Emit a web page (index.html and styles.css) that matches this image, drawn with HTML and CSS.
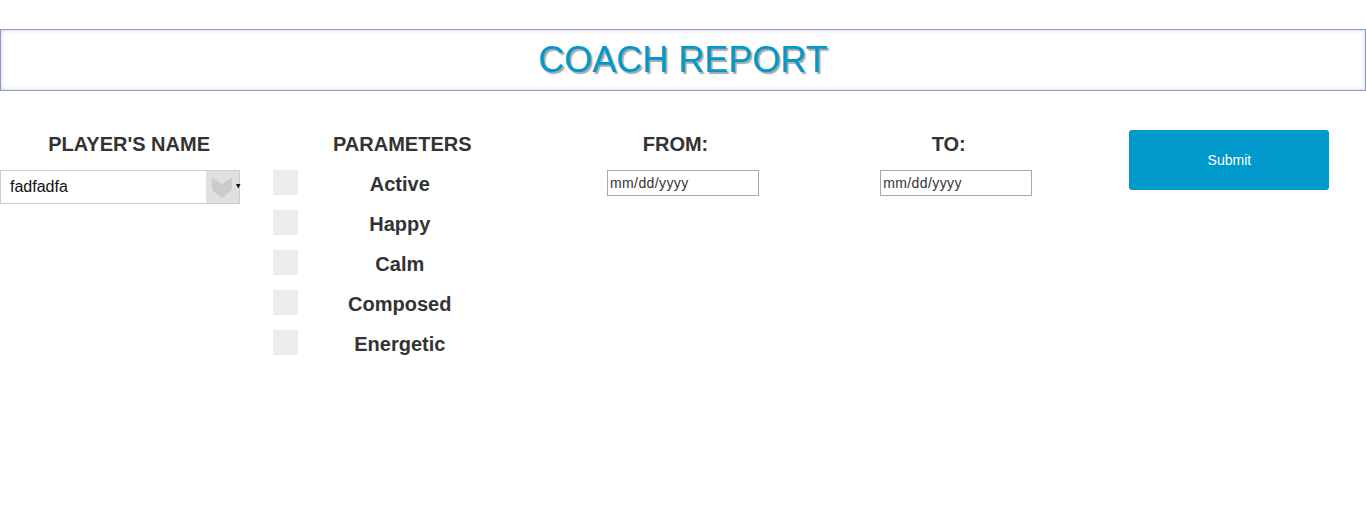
FILE: index.html
```html
<!DOCTYPE html>
<html>
<head>
<meta charset="utf-8">
<title>Coach Report</title>
<link rel="stylesheet" href="styles.css">
</head>
<body>
<div class="banner"><h1 class="title">COACH REPORT</h1></div>
<form class="report">
  <div class="col">
    <h3 class="head">PLAYER'S NAME</h3>
    <div class="select">
      <span class="select-value">fadfadfa</span>
      <span class="select-arrow">
        <svg width="33" height="32" viewBox="0 0 33 32"><path d="M6 7 L16 13 L26 7 L26 19 L16 27 L6 19 Z" fill="#cbcbcb"/><path d="M30 13 L34.5 13 L32.2 17.5 Z" fill="#111"/></svg>
      </span>
    </div>
  </div>
  <div class="col">
    <h3 class="head">PARAMETERS</h3>
    <div class="params">
      <div class="param"><span class="box"></span><span class="plabel">Active</span></div>
      <div class="param"><span class="box"></span><span class="plabel">Happy</span></div>
      <div class="param"><span class="box"></span><span class="plabel">Calm</span></div>
      <div class="param"><span class="box"></span><span class="plabel">Composed</span></div>
      <div class="param"><span class="box"></span><span class="plabel">Energetic</span></div>
    </div>
  </div>
  <div class="col center">
    <h3 class="head">FROM:</h3>
    <input class="date" type="text" placeholder="mm/dd/yyyy">
  </div>
  <div class="col center">
    <h3 class="head">TO:</h3>
    <input class="date" type="text" placeholder="mm/dd/yyyy">
  </div>
  <div class="col center">
    <button class="submit" type="button">Submit</button>
  </div>
</form>
</body>
</html>
```
FILE: styles.css
```css
html, body {
  margin: 0;
  padding: 0;
  background: #fff;
  font-family: "Liberation Sans", Arial, sans-serif;
  color: #333;
}
.banner {
  margin-top: 29px;
  height: 60px;
  width: 1364px;
  border: 1px solid #8f9ec0;
  box-shadow: inset 0 0 4px rgba(143, 158, 192, 0.45);
  display: flex;
  align-items: center;
  justify-content: center;
}
.title {
  margin: 0;
  font-size: 36px;
  font-weight: normal;
  line-height: 40px;
  color: #0099cc;
  text-shadow: 2px 2px 1px rgba(0, 0, 0, 0.35);
}
.report {
  display: grid;
  grid-template-columns: repeat(5, 1fr);
  padding-top: 39px;
}
.col {
  display: flex;
  flex-direction: column;
  align-items: flex-start;
}
.col.center {
  align-items: center;
}
.head {
  align-self: stretch;
  margin: 2px 0 14px;
  padding-right: 15px;
  font-size: 20px;
  line-height: 24px;
  font-weight: bold;
  text-align: center;
  color: #333;
}
.select {
  box-sizing: border-box;
  width: 240px;
  height: 34px;
  border: 1px solid #ccc;
  display: flex;
  align-items: center;
  justify-content: space-between;
  background: #fff;
}
.select-value {
  padding-left: 9px;
  font-size: 16px;
  color: #111;
}
.select-arrow {
  width: 33px;
  height: 32px;
  background: #e0e0e0;
  display: flex;
  overflow: visible;
}
.select-arrow svg {
  overflow: visible;
}
.params {
  align-self: stretch;
  display: flex;
  flex-direction: column;
  gap: 15px;
}
.param {
  display: grid;
  align-items: center;
  height: 25px;
}
.box {
  grid-area: 1 / 1;
  justify-self: start;
  width: 25px;
  height: 25px;
  background: #ececec;
}
.plabel {
  grid-area: 1 / 1;
  justify-self: center;
  padding-right: 20px;
  line-height: 25px;
  transform: translateY(2px);
  font-size: 20px;
  font-weight: bold;
  color: #333;
}
.date {
  box-sizing: border-box;
  width: 152px;
  height: 26px;
  margin: 0;
  border: 1px solid #a9a9a9;
  padding: 0 2px;
  font-family: "Liberation Sans", Arial, sans-serif;
  font-size: 14px;
  letter-spacing: 0.4px;
  color: #333;
  outline: none;
}
.date::placeholder {
  color: #333;
  opacity: 1;
}
.submit {
  width: 200px;
  height: 60px;
  border: none;
  border-radius: 3px;
  background: #0099cc;
  color: #fff;
  font-family: "Liberation Sans", Arial, sans-serif;
  font-size: 14px;
  cursor: pointer;
}
```
